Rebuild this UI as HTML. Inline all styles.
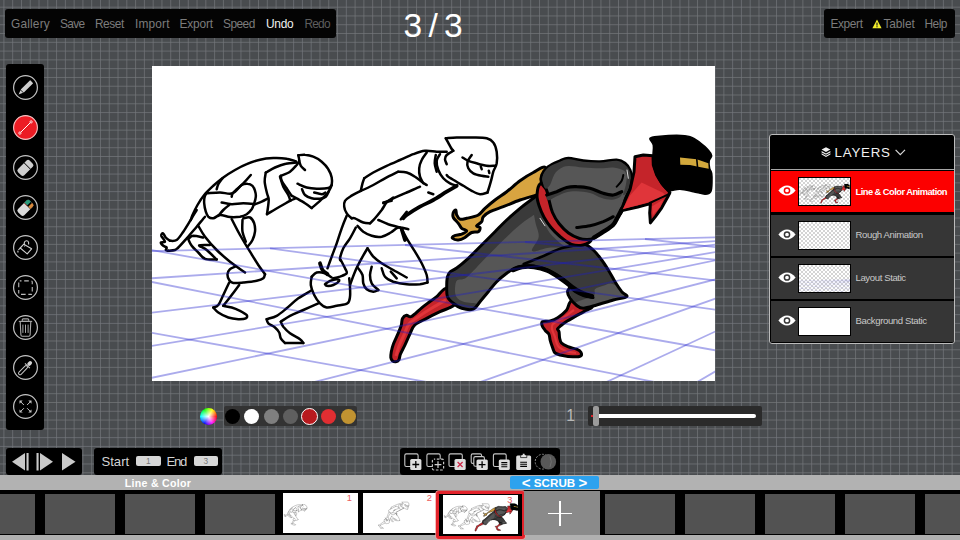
<!DOCTYPE html>
<html lang="en"><head><meta charset="utf-8"><title>Animation Desk</title>
<style>
*{box-sizing:border-box;margin:0;padding:0}
html,body{width:960px;height:540px;overflow:hidden}
body{position:relative;background-color:#494c4f;font-family:"Liberation Sans",sans-serif;}
.abs{position:absolute}
.panel{position:absolute;background:#040404;border-radius:3px}
.mi{position:absolute;top:17px;font-size:11.9px;line-height:15px;color:#7c7c7c;white-space:nowrap}
#counter{position:absolute;left:403.6px;top:6px;font-size:33.5px;line-height:40px;color:#fff;letter-spacing:6.2px;white-space:nowrap}
#canvas{position:absolute;left:152px;top:66px;width:563px;height:315px;background:#fff;overflow:hidden}
.tool{position:absolute;left:12.5px;width:25px;height:25px;border-radius:50%;border:1.4px solid #c8c8c8}
.tool svg{position:absolute;left:-1.4px;top:-1.4px}
#strip{position:absolute;left:0;top:490.2px;width:960px;height:44.8px;background:#000}
#stripb{position:absolute;left:0;top:535px;width:960px;height:5px;background:#b0b0b0}
#label{position:absolute;left:0;top:475px;width:960px;height:15.3px;background:#b2b2b2}
.fr{position:absolute;top:494px;width:70px;height:39.5px;background:#525252}
.th{position:absolute;top:493px;width:75px;height:40px;background:#fff;overflow:hidden}
.num{position:absolute;top:-.5px;right:5.5px;font-size:9.3px;color:#ec5d60}
.lrow{position:absolute;left:771px;width:182.5px;height:41px;background:#363636}
.lth{position:absolute;left:27px;top:6px;width:53px;height:29px;border:1px solid #000;background:#fff;overflow:hidden}
.ltx{position:absolute;left:84.5px;top:14.5px;font-size:9.6px;line-height:12px;color:#c9c9c9;white-space:nowrap;letter-spacing:-.4px}
.eye{position:absolute;left:6.5px;top:14px}
</style></head>
<body>
<svg width="0" height="0" style="position:absolute"><defs><g id="f1"><g fill="none" stroke="#000" stroke-width="2.5" stroke-linecap="round" stroke-linejoin="round"><path d="M298.3 155.3 C299.4 155.2 302.5 154.4 305.0 154.7 C307.5 154.9 310.6 155.5 313.3 156.7 C316.1 157.8 319.2 159.6 321.7 161.7 C324.2 163.8 326.7 166.5 328.3 169.2 C330.0 171.8 331.1 174.9 331.7 177.5 C332.2 180.1 332.2 182.7 331.7 185.0 C331.2 187.3 329.8 189.5 328.7 191.3 C327.6 193.1 326.4 194.2 325.0 195.8 C323.6 197.4 322.2 198.8 320.0 200.8 C317.8 202.9 313.1 206.8 311.7 208.0"/><path d="M311.7 208.0 C310.6 207.2 307.5 204.9 305.0 203.3 C302.5 201.7 298.9 199.6 296.7 198.3 C294.4 197.1 292.5 196.2 291.7 195.8"/><path d="M298.3 155.3 C298.5 156.2 299.4 159.2 299.2 160.8 C298.9 162.4 298.2 163.2 296.7 165.0 C295.1 166.8 292.6 169.9 290.0 171.7 C287.4 173.5 282.4 175.1 280.8 175.8"/><path d="M280.8 175.8 C281.0 176.7 280.7 178.8 281.7 180.8 C282.6 182.9 285.0 185.8 286.7 188.3 C288.3 190.8 290.8 194.6 291.7 195.8"/><path d="M299.2 160.8 C299.4 161.7 299.9 164.3 300.8 165.8 C301.8 167.4 304.3 169.3 305.0 170.0"/><path d="M297.5 183.7 C299.0 184.3 303.5 186.7 306.7 187.5 C309.9 188.3 313.1 188.6 316.7 188.7 C320.3 188.8 325.8 188.6 328.3 188.0 C330.8 187.4 331.1 185.5 331.7 185.0"/><path d="M302.0 189.2 C302.5 190.1 303.4 193.5 305.0 195.0 C306.6 196.5 309.2 197.7 311.7 198.3 C314.2 198.9 317.6 198.9 320.0 198.7 C322.4 198.4 324.4 197.8 325.8 196.7 C327.3 195.5 328.2 192.5 328.7 191.7"/><path d="M314.2 192.5 C315.4 192.8 319.8 194.2 321.7 194.2 C323.5 194.2 324.7 192.8 325.3 192.5"/><path d="M296.7 162.5 C294.9 162.7 289.4 162.8 285.8 163.7 C282.2 164.5 278.3 166.0 275.0 167.5 C271.7 169.0 267.4 171.7 265.8 172.5"/><path d="M265.8 172.5 C265.6 174.0 264.5 178.2 264.7 181.7 C264.9 185.1 266.3 190.3 267.0 193.3 C267.7 196.4 268.7 196.5 268.7 200.0 C268.7 203.5 267.3 211.8 267.0 214.2"/><path d="M267.0 214.2 C268.9 213.1 274.5 209.7 278.3 207.5 C282.2 205.3 287.2 202.3 290.0 200.8 C292.8 199.4 294.2 199.0 295.0 198.7"/><path d="M280.0 176.7 C280.6 178.3 281.9 183.6 283.3 186.7 C284.7 189.7 287.2 192.6 288.3 195.0 C289.5 197.4 290.0 199.9 290.3 200.8"/><path d="M295.8 161.3 C294.3 160.9 290.4 159.2 286.7 158.7 C282.9 158.1 277.8 157.8 273.3 158.0 C268.9 158.2 264.4 158.6 260.0 159.7 C255.6 160.7 250.8 162.4 246.7 164.2 C242.5 165.9 238.9 167.8 235.0 170.0 C231.1 172.2 226.9 174.9 223.3 177.5 C219.7 180.1 216.5 182.9 213.3 185.8 C210.1 188.8 206.8 191.8 204.2 195.0 C201.5 198.2 199.4 201.7 197.5 205.0 C195.6 208.3 193.6 212.5 192.5 215.0 C191.4 217.5 191.1 219.2 190.8 220.0"/><path d="M222.5 178.3 C221.8 179.3 219.3 182.4 218.3 184.2 C217.4 186.0 216.9 188.3 216.7 189.2"/><path d="M206.7 193.3 C208.9 193.2 215.7 192.5 220.0 192.5 C224.3 192.5 228.9 194.6 232.5 193.3 C236.1 192.1 239.2 186.6 241.7 185.0 C244.2 183.4 245.7 183.5 247.5 183.7 C249.3 183.8 251.2 184.6 252.5 185.8 C253.8 187.0 254.4 189.0 255.0 190.8 C255.6 192.6 256.0 194.6 255.8 196.7 C255.7 198.8 254.9 201.2 254.2 203.3 C253.5 205.4 252.9 207.4 251.7 209.2 C250.4 211.0 248.6 212.9 246.7 214.2 C244.7 215.4 242.8 216.2 240.0 216.7 C237.2 217.1 233.3 217.3 230.0 217.0 C226.7 216.7 222.8 214.8 220.0 215.0 C217.2 215.2 215.3 218.1 213.3 218.3 C211.4 218.6 209.6 217.8 208.3 216.7 C207.1 215.6 206.5 213.9 205.8 211.7 C205.1 209.4 204.4 205.8 204.2 203.3 C204.0 200.8 204.2 198.3 204.7 196.7 C205.1 195.0 206.3 193.9 206.7 193.3"/><path d="M250.8 175.0 C249.6 176.4 246.2 180.4 243.3 183.3 C240.4 186.2 235.3 190.3 233.3 192.5 C231.4 194.7 231.9 196.0 231.7 196.7"/><path d="M221.7 202.5 C223.3 202.8 228.1 204.0 231.7 204.2 C235.3 204.3 239.4 203.3 243.3 203.3 C247.2 203.3 253.1 204.0 255.0 204.2"/><path d="M229.2 205.0 C228.2 205.8 225.1 208.2 223.3 210.0 C221.5 211.8 219.2 214.9 218.3 215.8"/><path d="M255.0 204.2 C256.1 203.8 259.6 202.6 261.7 201.7 C263.8 200.8 266.5 199.2 267.5 198.7"/><path d="M196.7 210.0 C195.8 211.4 193.9 214.7 191.7 218.3 C189.4 221.9 185.8 228.1 183.3 231.7 C180.8 235.3 178.9 238.5 176.7 240.0 C174.4 241.5 171.1 240.7 170.0 240.8"/><path d="M205.0 216.7 C203.6 218.3 199.7 223.1 196.7 226.7 C193.6 230.3 189.7 234.9 186.7 238.3 C183.6 241.8 180.3 245.6 178.3 247.5 C176.4 249.4 176.7 249.4 175.0 250.0 C173.3 250.6 169.4 250.7 168.3 250.8"/><path d="M170.0 240.8 C169.3 240.3 167.0 238.8 165.8 237.5 C164.7 236.2 163.8 233.6 163.0 233.3 C162.2 233.1 161.0 234.4 161.3 235.8 C161.7 237.2 165.1 240.6 165.0 241.7 C164.9 242.8 161.1 241.8 160.8 242.5 C160.6 243.2 162.4 245.0 163.3 245.8 C164.3 246.7 166.2 246.8 166.7 247.5 C167.1 248.2 165.6 249.4 165.8 250.0 C166.1 250.6 167.9 250.7 168.3 250.8"/><path d="M189.2 238.0 C189.9 237.6 191.0 235.9 193.3 235.8 C195.7 235.8 201.7 237.2 203.3 237.5"/><path d="M188.3 239.2 C188.9 240.3 190.0 243.6 191.7 245.8 C193.3 248.1 196.1 250.3 198.3 252.5 C200.6 254.7 201.9 257.7 205.0 258.8 C208.1 260.0 214.7 259.4 216.7 259.5"/><path d="M216.7 259.5 C215.0 257.9 209.6 252.4 206.7 250.0 C203.8 247.6 198.6 246.2 199.2 245.3 C199.7 244.5 208.2 245.1 210.0 245.0"/><path d="M198.3 225.8 C199.4 227.6 201.9 232.6 205.0 236.7 C208.1 240.7 212.5 245.8 216.7 250.0 C220.8 254.2 225.3 257.9 230.0 261.7 C234.7 265.4 242.5 270.7 245.0 272.5"/><path d="M231.7 219.2 C233.1 221.8 236.9 229.6 240.0 235.0 C243.1 240.4 246.9 246.7 250.0 251.7 C253.1 256.7 255.8 261.2 258.3 265.0 C260.8 268.8 263.9 272.6 265.0 274.2"/><path d="M265.0 274.2 C264.7 274.9 264.7 277.2 263.3 278.3 C261.9 279.4 260.0 280.1 256.7 280.8 C253.3 281.5 247.2 282.1 243.3 282.5 C239.4 282.9 235.7 283.4 233.3 283.0 C231.0 282.6 230.1 281.5 229.2 280.0 C228.2 278.5 227.4 276.0 227.5 274.2 C227.6 272.4 228.8 270.4 230.0 269.2 C231.2 267.9 234.2 267.1 235.0 266.7"/><path d="M243.3 218.3 C244.4 218.2 248.2 216.7 250.0 217.5 C251.8 218.3 253.3 221.0 254.2 223.3 C255.0 225.7 255.3 228.9 255.0 231.7 C254.7 234.4 253.6 237.6 252.5 240.0 C251.4 242.4 249.0 244.9 248.3 245.8"/><path d="M242.5 220.0 C242.5 221.9 241.9 228.1 242.5 231.7 C243.1 235.3 245.3 240.0 245.8 241.7"/><path d="M229.2 282.5 C228.2 284.6 225.1 291.2 223.3 295.0 C221.5 298.8 220.0 302.9 218.3 305.0 C216.7 307.1 214.2 307.1 213.3 307.5"/><path d="M239.2 285.0 C237.9 286.7 234.3 291.5 231.7 295.0 C229.0 298.5 224.7 304.0 223.3 305.8"/><path d="M213.3 307.5 C214.2 308.3 215.8 310.8 218.3 312.5 C220.8 314.2 225.0 316.4 228.3 317.5 C231.7 318.6 235.4 319.0 238.3 319.2 C241.2 319.3 244.4 319.0 245.8 318.3 C247.2 317.6 247.6 316.2 246.7 315.0 C245.7 313.8 242.5 312.1 240.0 310.8 C237.5 309.6 234.4 308.3 231.7 307.5 C228.9 306.7 224.7 306.1 223.3 305.8"/></g></g><g id="f2"><g fill="none" stroke="#000" stroke-width="2.5" stroke-linecap="round" stroke-linejoin="round"><path d="M445.8 138.3 C447.6 138.2 452.1 137.6 456.7 137.5 C461.2 137.4 468.3 137.4 473.3 137.5 C478.3 137.6 483.3 137.5 486.7 138.3 C490.0 139.2 491.7 140.3 493.3 142.5 C495.0 144.7 496.1 148.2 496.7 151.7 C497.2 155.1 497.2 160.0 496.7 163.3 C496.1 166.7 494.3 168.6 493.3 171.7 C492.4 174.7 491.8 178.2 490.8 181.7 C489.9 185.1 488.1 190.7 487.5 192.5"/><path d="M487.5 192.5 C486.2 192.8 482.6 194.4 480.0 194.2 C477.4 193.9 474.4 192.2 471.7 190.8 C468.9 189.4 466.1 187.5 463.3 185.8 C460.6 184.2 457.5 182.4 455.0 180.8 C452.5 179.3 449.7 177.6 448.3 176.7 C446.9 175.7 446.9 175.3 446.7 175.0"/><path d="M445.8 138.3 C446.7 139.9 449.6 145.4 450.8 147.5 C452.1 149.6 452.9 150.3 453.3 150.8"/><path d="M453.3 150.8 C452.2 151.5 448.1 153.6 446.7 155.0 C445.3 156.4 445.0 157.6 445.0 159.2 C445.0 160.7 446.4 163.3 446.7 164.2"/><path d="M462.5 157.5 C463.5 158.1 466.0 159.9 468.3 160.8 C470.7 161.8 473.6 162.5 476.7 163.3 C479.7 164.2 483.6 165.4 486.7 165.8 C489.7 166.2 493.6 165.8 495.0 165.8"/><path d="M471.7 155.0 C471.0 156.1 468.1 159.4 467.5 161.7 C466.9 163.9 467.4 166.4 468.3 168.3 C469.3 170.3 471.1 172.1 473.3 173.3 C475.6 174.6 479.2 175.3 481.7 175.8 C484.2 176.4 487.2 176.5 488.3 176.7"/><path d="M480.8 166.7 L481.7 169.2"/><path d="M488.8 170.8 L489.3 173.0"/><path d="M440.0 154.2 C439.4 155.3 436.9 158.2 436.7 160.8 C436.4 163.5 437.2 167.1 438.3 170.0 C439.4 172.9 441.4 176.1 443.3 178.3 C445.3 180.6 447.8 182.1 450.0 183.3 C452.2 184.6 455.6 185.4 456.7 185.8"/><path d="M435.8 155.0 C435.6 156.4 434.5 160.6 434.7 163.3 C434.8 166.1 436.3 170.3 436.7 171.7"/><path d="M446.7 151.7 C445.0 151.7 440.3 151.8 436.7 151.7 C433.1 151.5 428.9 150.4 425.0 150.8 C421.1 151.2 417.5 152.6 413.3 154.2 C409.2 155.7 404.4 158.1 400.0 160.0 C395.6 161.9 391.1 163.8 386.7 165.8 C382.2 167.9 377.1 170.4 373.3 172.5 C369.6 174.6 365.7 177.4 364.2 178.3"/><path d="M364.2 178.3 C363.9 179.2 363.1 181.2 362.5 183.3 C361.9 185.4 361.1 189.6 360.8 190.8"/><path d="M360.8 190.8 C362.9 189.9 369.3 187.1 373.3 185.0 C377.4 182.9 380.8 180.6 385.0 178.3 C389.2 176.1 396.1 172.8 398.3 171.7"/><path d="M398.3 171.7 C399.7 171.8 403.9 171.7 406.7 172.5 C409.4 173.3 412.5 175.1 415.0 176.7 C417.5 178.2 419.7 180.3 421.7 181.7 C423.6 183.1 425.8 184.4 426.7 185.0"/><path d="M426.7 152.5 C425.8 153.8 422.9 157.4 421.7 160.0 C420.4 162.6 419.4 165.6 419.2 168.3 C418.9 171.1 419.3 174.2 420.0 176.7 C420.7 179.2 422.8 182.2 423.3 183.3"/><path d="M360.8 190.8 C359.0 191.8 352.6 195.0 350.0 196.7 C347.4 198.3 346.0 199.2 345.0 200.8 C344.0 202.5 343.9 204.6 344.2 206.7 C344.4 208.8 345.4 211.4 346.7 213.3 C347.9 215.3 350.8 217.5 351.7 218.3"/><path d="M351.7 218.3 C352.2 218.3 353.1 217.6 355.0 218.3 C356.9 219.0 360.8 221.7 363.3 222.5 C365.8 223.3 368.9 223.2 370.0 223.3"/><path d="M420.0 186.7 C417.8 187.6 411.1 190.6 406.7 192.5 C402.2 194.4 397.2 196.5 393.3 198.3 C389.4 200.1 385.0 202.5 383.3 203.3"/><path d="M393.3 197.5 C392.2 198.3 388.6 200.4 386.7 202.5 C384.7 204.6 383.6 207.4 381.7 210.0 C379.7 212.6 376.9 216.1 375.0 218.3 C373.1 220.6 370.8 222.5 370.0 223.3"/><path d="M383.3 202.5 L391.7 200.8"/><path d="M428.3 192.5 L433.3 194.2"/><path d="M406.7 211.7 L400.8 219.2"/><path d="M357.5 225.8 C358.5 226.8 361.0 230.0 363.3 231.7 C365.7 233.3 368.6 235.0 371.7 235.8 C374.7 236.7 378.5 237.2 381.7 236.7 C384.9 236.1 388.1 234.0 390.8 232.5 C393.6 231.0 395.4 228.1 398.3 227.5 C401.2 226.9 406.7 228.9 408.3 229.2"/><path d="M378.3 220.0 C380.0 220.7 384.7 222.9 388.3 224.2 C391.9 225.4 398.1 226.9 400.0 227.5"/><path d="M346.7 215.8 C345.8 217.9 343.3 223.8 341.7 228.3 C340.0 232.9 338.3 238.6 336.7 243.3 C335.0 248.1 333.2 252.5 331.7 256.7 C330.1 260.8 328.2 266.4 327.5 268.3"/><path d="M355.8 227.5 C354.9 229.3 352.1 234.9 350.0 238.3 C347.9 241.8 345.0 245.0 343.3 248.3 C341.7 251.7 340.4 256.2 340.0 258.3 C339.6 260.4 340.7 260.4 340.8 260.8"/><path d="M340.8 260.0 C341.5 261.4 344.0 266.1 345.0 268.3 C346.0 270.6 347.5 271.9 346.7 273.3 C345.8 274.7 342.2 275.8 340.0 276.7 C337.8 277.5 334.4 278.1 333.3 278.3"/><path d="M401.7 229.2 C402.5 230.7 404.4 234.6 406.7 238.3 C408.9 242.1 412.5 247.5 415.0 251.7 C417.5 255.8 419.7 259.4 421.7 263.3 C423.6 267.2 425.7 271.8 426.7 275.0 C427.6 278.2 427.4 281.2 427.5 282.5"/><path d="M367.5 248.3 C366.5 250.0 363.8 254.4 361.7 258.3 C359.6 262.2 356.9 267.2 355.0 271.7 C353.1 276.1 350.8 282.8 350.0 285.0"/><path d="M367.5 248.3 C368.5 249.7 371.0 254.2 373.3 256.7 C375.7 259.2 378.3 261.1 381.7 263.3 C385.0 265.6 389.2 267.6 393.3 270.0 C397.5 272.4 404.4 276.2 406.7 277.5"/><path d="M311.7 276.7 C311.5 278.1 310.4 281.9 310.8 285.0 C311.2 288.1 312.6 291.9 314.2 295.0 C315.7 298.1 317.9 301.2 320.0 303.3 C322.1 305.4 323.9 307.1 326.7 307.5 C329.4 307.9 333.2 306.5 336.7 305.8 C340.1 305.1 345.3 304.9 347.5 303.3 C349.7 301.8 349.6 299.4 350.0 296.7 C350.4 293.9 350.1 289.7 350.0 286.7 C349.9 283.6 349.3 279.7 349.2 278.3"/><path d="M311.7 276.7 C312.5 276.0 314.4 273.1 316.7 272.5 C318.9 271.9 322.5 272.5 325.0 273.3 C327.5 274.2 330.6 276.8 331.7 277.5"/><path d="M325.0 284.2 C325.8 283.6 328.1 281.7 330.0 280.8 C331.9 280.0 335.1 279.2 336.7 279.2 C338.2 279.2 339.7 279.9 339.2 280.8 C338.6 281.8 335.4 284.2 333.3 285.0 C331.2 285.8 328.1 286.0 326.7 285.8 C325.3 285.7 325.3 284.4 325.0 284.2"/><path d="M358.3 268.3 C359.0 269.4 361.7 272.5 362.5 275.0 C363.3 277.5 362.6 281.0 363.3 283.3 C364.0 285.7 365.0 287.8 366.7 289.2 C368.3 290.6 371.4 291.5 373.3 291.7 C375.3 291.8 377.5 290.3 378.3 290.0"/><path d="M371.7 266.7 C371.4 268.1 370.0 272.2 370.0 275.0 C370.0 277.8 370.3 280.8 371.7 283.3 C373.1 285.8 377.2 288.9 378.3 290.0"/><path d="M381.7 268.3 C382.2 269.7 383.1 274.4 385.0 276.7 C386.9 278.9 389.7 280.4 393.3 281.7 C396.9 282.9 402.2 283.8 406.7 284.2 C411.1 284.6 416.5 284.4 420.0 284.2 C423.5 283.9 426.2 282.8 427.5 282.5"/><path d="M390.8 271.7 L396.7 278.3"/><path d="M310.8 290.8 C308.8 292.1 302.4 295.4 298.3 298.3 C294.3 301.2 290.3 305.4 286.7 308.3 C283.1 311.2 280.0 314.0 276.7 315.8 C273.3 317.6 268.3 318.6 266.7 319.2"/><path d="M318.3 303.3 C315.8 304.4 308.1 307.9 303.3 310.0 C298.6 312.1 293.8 313.9 290.0 315.8 C286.2 317.8 282.4 320.7 280.8 321.7"/><path d="M266.7 319.2 C266.9 319.9 266.9 321.9 268.3 323.3 C269.7 324.7 273.2 326.0 275.0 327.5 C276.8 329.0 278.2 330.7 279.2 332.5 C280.1 334.3 279.9 336.6 280.8 338.3 C281.8 340.1 284.3 342.2 285.0 343.0"/><path d="M285.0 343.0 L303.3 343.0"/><path d="M303.3 343.0 C302.8 342.4 302.2 340.8 300.0 339.2 C297.8 337.6 292.8 335.4 290.0 333.3 C287.2 331.2 284.9 328.6 283.3 326.7 C281.8 324.7 281.2 322.5 280.8 321.7"/></g><g fill="none" stroke="#000" stroke-width="3.8" stroke-linecap="round" stroke-linejoin="round"><path d="M456.7 185.8 C455.0 186.8 450.6 189.3 446.7 191.7 C442.8 194.0 437.8 197.5 433.3 200.0 C428.9 202.5 424.4 204.2 420.0 206.7 C415.6 209.2 409.4 213.1 406.7 215.0 C403.9 216.9 403.9 217.8 403.3 218.3"/><path d="M320.0 263.3 C320.4 264.4 321.2 268.2 322.5 270.0 C323.8 271.8 326.7 273.5 327.5 274.2"/><path d="M401.7 229.2 L405.0 240.0"/></g></g><g id="f3"><path d="M572.8 300.0 C568.5 300.7 569.0 307.2 566.5 310.2 C564.0 313.1 560.4 315.9 557.7 317.7 C555.0 319.5 552.7 320.3 550.2 320.9 C547.7 321.5 544.0 320.8 542.6 321.5 C541.2 322.2 541.6 323.8 542.0 325.3 C542.4 326.8 544.0 328.8 545.1 330.3 C546.2 331.8 548.0 332.4 548.9 334.1 C549.8 335.8 549.6 338.1 550.2 340.4 C550.8 342.7 551.9 345.8 552.7 347.9 C553.5 350.0 553.5 351.7 555.2 353.0 C556.9 354.3 559.8 354.9 562.7 355.5 C565.6 356.1 569.8 356.7 572.8 356.8 C575.8 356.9 579.0 356.9 580.4 356.1 C581.8 355.4 581.6 353.5 581.0 352.3 C580.4 351.1 578.8 350.1 576.6 349.2 C574.4 348.3 570.3 347.8 567.8 346.7 C565.3 345.6 562.9 344.4 561.5 342.9 C560.1 341.4 560.0 339.8 559.6 337.9 C559.2 336.0 559.4 333.1 559.0 331.6 C558.6 330.1 557.2 330.0 557.5 329.0 C557.8 328.0 559.5 326.8 561.0 325.5 C562.5 324.2 564.1 323.0 566.5 321.5 C568.9 320.0 572.3 318.1 575.3 316.4 C578.2 314.7 581.4 313.1 584.2 311.4 C587.0 309.7 593.9 307.9 592.0 306.0 C590.1 304.1 577.0 299.3 572.8 300.0Z" fill="#c4242a" stroke="#000" stroke-width="3" stroke-linejoin="round" stroke-linecap="round"/><path d="M574.0 310.0 C572.2 311.3 566.5 315.7 563.0 318.0 C559.5 320.3 554.8 322.2 553.0 324.0 C551.2 325.8 551.7 326.8 552.0 329.0 C552.3 331.2 554.0 334.2 555.0 337.0 C556.0 339.8 556.2 343.7 558.0 346.0 C559.8 348.3 563.0 349.8 566.0 351.0 C569.0 352.2 574.3 352.7 576.0 353.0" fill="none" stroke="#e0353a" stroke-width="2.2"/><path d="M447.0 288.0 C443.4 287.8 439.5 294.4 436.7 296.7 C433.9 298.9 432.5 299.6 430.0 301.5 C427.5 303.4 424.8 305.3 421.7 307.8 C418.6 310.3 414.0 315.2 411.5 316.5 C409.0 317.8 408.0 315.0 406.5 315.3 C405.0 315.6 403.4 316.8 402.5 318.5 C401.6 320.2 402.0 322.9 401.2 325.5 C400.4 328.1 399.0 331.3 397.7 334.4 C396.4 337.4 394.6 340.9 393.5 343.8 C392.4 346.7 391.8 349.4 391.3 351.7 C390.9 354.0 390.6 356.0 390.8 357.5 C391.0 359.0 391.7 360.1 392.5 360.8 C393.3 361.5 394.8 361.8 395.8 361.7 C396.9 361.6 398.0 361.3 398.8 360.0 C399.6 358.7 399.5 356.5 400.5 354.0 C401.5 351.5 403.4 348.2 405.0 344.8 C406.6 341.4 408.6 336.6 410.2 333.3 C411.8 330.0 412.1 327.5 414.8 325.0 C417.6 322.5 422.5 320.5 426.7 318.3 C430.9 316.1 435.6 313.8 440.0 311.7 C444.4 309.6 450.3 308.1 453.3 305.8 C456.3 303.5 459.1 301.0 458.0 298.0 C456.9 295.0 450.6 288.2 447.0 288.0Z" fill="#c4242a" stroke="#000" stroke-width="3" stroke-linejoin="round" stroke-linecap="round"/><path d="M446.0 300.0 C443.7 301.3 436.7 305.2 432.0 308.0 C427.3 310.8 421.8 314.3 418.0 317.0 C414.2 319.7 411.3 321.0 409.0 324.0 C406.7 327.0 405.7 331.3 404.0 335.0 C402.3 338.7 400.3 342.5 399.0 346.0 C397.7 349.5 396.5 354.3 396.0 356.0" fill="none" stroke="#e0353a" stroke-width="3"/><path d="M546.0 168.0 C544.0 164.8 537.6 170.4 533.3 172.5 C529.0 174.6 524.4 177.6 520.0 180.8 C515.6 184.0 510.9 188.5 506.7 191.7 C502.5 194.9 498.6 197.2 495.0 200.0 C491.4 202.8 487.8 205.8 485.0 208.3 C482.2 210.8 481.4 213.3 478.3 215.0 C475.2 216.7 469.7 217.6 466.7 218.3 C463.6 219.0 461.7 219.7 460.0 219.2 C458.3 218.6 457.4 216.5 456.7 215.0 C456.0 213.5 456.4 210.4 455.8 210.0 C455.3 209.6 453.8 211.2 453.3 212.5 C452.9 213.8 452.5 215.7 453.3 217.5 C454.2 219.3 456.9 221.5 458.3 223.3 C459.7 225.1 460.3 227.1 461.7 228.3 C463.1 229.6 466.7 229.9 466.7 230.8 C466.7 231.8 463.8 233.3 461.7 234.2 C459.6 235.0 455.7 235.1 454.2 235.8 C452.6 236.5 451.8 237.6 452.5 238.3 C453.2 239.0 456.2 240.1 458.3 240.0 C460.4 239.9 462.8 238.8 465.0 237.5 C467.2 236.2 469.4 233.5 471.7 232.5 C473.9 231.5 476.9 232.5 478.3 231.7 C479.7 230.8 480.3 228.5 480.0 227.5 C479.7 226.5 476.4 226.8 476.7 225.8 C476.9 224.9 480.6 223.2 481.7 221.7 C482.8 220.1 481.9 218.4 483.3 216.7 C484.7 215.0 486.7 213.4 490.0 211.7 C493.3 210.0 498.3 208.6 503.3 206.7 C508.3 204.8 514.4 201.9 520.0 200.0 C525.6 198.1 532.5 196.3 536.7 195.0 C540.9 193.7 543.5 196.5 545.0 192.0 C546.5 187.5 548.0 171.2 546.0 168.0Z" fill="#d8a440" stroke="#000" stroke-width="3" stroke-linejoin="round" stroke-linecap="round"/><clipPath id="pc"><path d="M537.0 196.0 C535.9 194.9 536.1 196.2 533.3 198.3 C530.5 200.4 524.4 204.7 520.0 208.3 C515.6 211.9 510.9 216.1 506.7 220.0 C502.5 223.9 499.2 227.5 495.0 231.7 C490.8 235.9 486.1 240.6 481.7 245.0 C477.2 249.4 472.5 254.5 468.3 258.3 C464.1 262.1 459.8 265.7 456.7 268.0 C453.6 270.3 451.5 270.6 450.0 272.0 C448.5 273.4 448.1 274.2 447.5 276.7 C446.9 279.1 446.7 283.4 446.7 286.7 C446.7 290.0 446.4 293.9 447.5 296.7 C448.6 299.5 450.9 301.4 453.3 303.3 C455.7 305.2 458.4 307.3 461.7 308.3 C465.0 309.3 470.2 310.3 473.3 309.2 C476.4 308.1 477.5 304.6 480.0 301.7 C482.5 298.8 485.5 295.0 488.3 291.7 C491.1 288.4 493.6 284.8 496.7 281.7 C499.8 278.6 503.9 275.4 506.7 273.3 C509.5 271.2 511.1 270.1 513.3 269.0 C515.5 267.9 516.7 267.0 520.0 266.5 C523.3 266.0 528.8 265.5 533.3 266.0 C537.8 266.5 542.2 267.7 546.7 269.5 C551.2 271.3 556.1 274.4 560.0 277.0 C563.9 279.6 568.8 282.6 570.0 285.0 C571.2 287.4 567.5 289.5 567.5 291.7 C567.5 293.9 568.5 296.0 570.0 298.3 C571.5 300.6 574.5 303.8 576.7 305.5 C578.9 307.2 580.0 308.4 583.3 308.3 C586.6 308.2 591.7 306.4 596.7 305.0 C601.7 303.6 608.3 301.4 613.3 300.0 C618.3 298.6 625.3 298.1 626.7 296.7 C628.1 295.3 623.7 294.2 621.7 291.7 C619.8 289.2 617.2 285.3 615.0 281.7 C612.8 278.1 610.5 273.6 608.3 270.0 C606.1 266.4 604.2 263.3 601.7 260.0 C599.2 256.7 596.4 252.8 593.3 250.0 C590.2 247.2 587.2 244.7 583.3 243.3 C579.4 241.9 573.9 242.9 570.0 241.7 C566.1 240.5 563.0 238.5 560.0 236.0 C557.0 233.5 554.2 229.9 551.7 226.7 C549.2 223.5 547.0 220.3 545.0 216.7 C543.0 213.1 541.3 208.4 540.0 205.0 C538.7 201.6 538.1 197.1 537.0 196.0Z"/></clipPath><path d="M537.0 196.0 C535.9 194.9 536.1 196.2 533.3 198.3 C530.5 200.4 524.4 204.7 520.0 208.3 C515.6 211.9 510.9 216.1 506.7 220.0 C502.5 223.9 499.2 227.5 495.0 231.7 C490.8 235.9 486.1 240.6 481.7 245.0 C477.2 249.4 472.5 254.5 468.3 258.3 C464.1 262.1 459.8 265.7 456.7 268.0 C453.6 270.3 451.5 270.6 450.0 272.0 C448.5 273.4 448.1 274.2 447.5 276.7 C446.9 279.1 446.7 283.4 446.7 286.7 C446.7 290.0 446.4 293.9 447.5 296.7 C448.6 299.5 450.9 301.4 453.3 303.3 C455.7 305.2 458.4 307.3 461.7 308.3 C465.0 309.3 470.2 310.3 473.3 309.2 C476.4 308.1 477.5 304.6 480.0 301.7 C482.5 298.8 485.5 295.0 488.3 291.7 C491.1 288.4 493.6 284.8 496.7 281.7 C499.8 278.6 503.9 275.4 506.7 273.3 C509.5 271.2 511.1 270.1 513.3 269.0 C515.5 267.9 516.7 267.0 520.0 266.5 C523.3 266.0 528.8 265.5 533.3 266.0 C537.8 266.5 542.2 267.7 546.7 269.5 C551.2 271.3 556.1 274.4 560.0 277.0 C563.9 279.6 568.8 282.6 570.0 285.0 C571.2 287.4 567.5 289.5 567.5 291.7 C567.5 293.9 568.5 296.0 570.0 298.3 C571.5 300.6 574.5 303.8 576.7 305.5 C578.9 307.2 580.0 308.4 583.3 308.3 C586.6 308.2 591.7 306.4 596.7 305.0 C601.7 303.6 608.3 301.4 613.3 300.0 C618.3 298.6 625.3 298.1 626.7 296.7 C628.1 295.3 623.7 294.2 621.7 291.7 C619.8 289.2 617.2 285.3 615.0 281.7 C612.8 278.1 610.5 273.6 608.3 270.0 C606.1 266.4 604.2 263.3 601.7 260.0 C599.2 256.7 596.4 252.8 593.3 250.0 C590.2 247.2 587.2 244.7 583.3 243.3 C579.4 241.9 573.9 242.9 570.0 241.7 C566.1 240.5 563.0 238.5 560.0 236.0 C557.0 233.5 554.2 229.9 551.7 226.7 C549.2 223.5 547.0 220.3 545.0 216.7 C543.0 213.1 541.3 208.4 540.0 205.0 C538.7 201.6 538.1 197.1 537.0 196.0Z" fill="#565656"/><g clip-path="url(#pc)"><path d="M532.1 195.0 C528.2 195.7 521.2 201.3 515.3 205.5 C509.4 209.6 503.1 214.2 496.5 220.1 C489.9 226.0 482.5 234.1 475.6 241.0 C468.6 248.0 459.9 257.1 454.6 261.9 C449.4 266.8 446.6 265.8 444.2 270.3 C441.7 274.8 438.5 285.2 440.0 289.1 C441.5 293.1 450.2 295.6 453.0 294.2 C455.8 292.8 454.4 283.6 456.7 280.8 C459.0 277.9 461.8 281.2 466.8 277.2 C471.7 273.3 479.7 264.0 486.4 257.1 C493.2 250.3 501.1 242.1 507.4 236.2 C513.6 230.3 519.2 225.6 524.1 221.6 C529.0 217.6 534.3 215.5 536.7 212.2 C539.0 208.8 539.1 204.1 538.3 201.3 C537.6 198.4 535.9 194.3 532.1 195.0Z" fill="#3a3a3a"/><path d="M533.7 207.6 C534.6 204.7 539.2 202.9 540.8 205.0 C542.4 207.1 541.9 215.5 543.3 220.1 C544.8 224.7 546.6 228.6 549.6 232.7 C552.7 236.7 559.0 241.9 561.8 244.4 C564.5 246.9 568.1 247.2 565.9 247.7 C563.8 248.3 554.4 247.2 548.8 247.7 C543.1 248.3 533.7 252.9 532.1 251.1 C530.4 249.3 538.2 241.7 538.7 236.8 C539.3 232.0 536.2 227.1 535.4 222.2 C534.6 217.3 532.8 210.4 533.7 207.6Z" fill="#3a3a3a"/><path d="M522.8 264.5 C522.1 262.9 534.0 260.4 540.4 257.8 C546.8 255.1 554.0 251.2 561.3 248.6 C568.7 245.9 578.1 242.3 584.4 242.1 C590.6 241.9 594.8 243.6 599.0 247.3 C603.2 251.0 606.0 258.5 609.5 264.0 C612.9 269.6 616.4 275.3 619.9 280.8 C623.4 286.2 632.5 292.6 630.4 296.7 C628.3 300.7 614.7 302.5 607.4 305.0 C600.0 307.6 592.0 312.7 586.4 312.2 C580.9 311.6 577.0 305.5 573.9 301.7 C570.8 297.9 570.8 294.1 568.0 289.6 C565.2 285.0 561.1 278.2 557.2 274.5 C553.2 270.8 550.3 268.8 544.6 267.2 C538.9 265.5 523.5 266.0 522.8 264.5Z" fill="#3a3a3a"/><path d="M595.0 289.2 C596.7 287.5 600.3 286.7 603.3 285.8 C606.4 285.0 608.9 282.1 613.3 284.2 C617.8 286.2 630.0 295.1 630.0 298.3 C630.0 301.5 618.9 301.7 613.3 303.3 C607.8 305.0 601.5 307.2 596.7 308.3 C591.8 309.4 587.8 310.8 584.2 310.0 C580.6 309.2 573.5 305.7 575.0 303.3 C576.5 301.0 590.0 298.2 593.3 295.8 C596.7 293.5 593.3 290.8 595.0 289.2Z" fill="#565656"/><path d="M446.7 266.7 C444.4 266.9 443.9 273.7 443.3 277.0 C442.8 280.3 443.1 283.1 443.3 286.7 C443.6 290.2 443.6 295.0 445.0 298.3 C446.4 301.7 448.8 304.4 451.7 306.7 C454.5 308.9 457.8 310.8 462.0 311.7 C466.2 312.5 474.1 312.9 476.7 311.7 C479.2 310.4 479.6 305.8 477.5 304.2 C475.4 302.6 467.7 303.2 464.2 302.0 C460.6 300.8 457.9 299.4 456.3 296.7 C454.8 293.9 454.6 288.9 454.7 285.3 C454.8 281.8 458.3 278.4 457.0 275.3 C455.7 272.2 448.9 266.4 446.7 266.7Z" fill="#3a3a3a"/></g><path d="M537.0 196.0 C535.9 194.9 536.1 196.2 533.3 198.3 C530.5 200.4 524.4 204.7 520.0 208.3 C515.6 211.9 510.9 216.1 506.7 220.0 C502.5 223.9 499.2 227.5 495.0 231.7 C490.8 235.9 486.1 240.6 481.7 245.0 C477.2 249.4 472.5 254.5 468.3 258.3 C464.1 262.1 459.8 265.7 456.7 268.0 C453.6 270.3 451.5 270.6 450.0 272.0 C448.5 273.4 448.1 274.2 447.5 276.7 C446.9 279.1 446.7 283.4 446.7 286.7 C446.7 290.0 446.4 293.9 447.5 296.7 C448.6 299.5 450.9 301.4 453.3 303.3 C455.7 305.2 458.4 307.3 461.7 308.3 C465.0 309.3 470.2 310.3 473.3 309.2 C476.4 308.1 477.5 304.6 480.0 301.7 C482.5 298.8 485.5 295.0 488.3 291.7 C491.1 288.4 493.6 284.8 496.7 281.7 C499.8 278.6 503.9 275.4 506.7 273.3 C509.5 271.2 511.1 270.1 513.3 269.0 C515.5 267.9 516.7 267.0 520.0 266.5 C523.3 266.0 528.8 265.5 533.3 266.0 C537.8 266.5 542.2 267.7 546.7 269.5 C551.2 271.3 556.1 274.4 560.0 277.0 C563.9 279.6 568.8 282.6 570.0 285.0 C571.2 287.4 567.5 289.5 567.5 291.7 C567.5 293.9 568.5 296.0 570.0 298.3 C571.5 300.6 574.5 303.8 576.7 305.5 C578.9 307.2 580.0 308.4 583.3 308.3 C586.6 308.2 591.7 306.4 596.7 305.0 C601.7 303.6 608.3 301.4 613.3 300.0 C618.3 298.6 625.3 298.1 626.7 296.7 C628.1 295.3 623.7 294.2 621.7 291.7 C619.8 289.2 617.2 285.3 615.0 281.7 C612.8 278.1 610.5 273.6 608.3 270.0 C606.1 266.4 604.2 263.3 601.7 260.0 C599.2 256.7 596.4 252.8 593.3 250.0 C590.2 247.2 587.2 244.7 583.3 243.3 C579.4 241.9 573.9 242.9 570.0 241.7 C566.1 240.5 563.0 238.5 560.0 236.0 C557.0 233.5 554.2 229.9 551.7 226.7 C549.2 223.5 547.0 220.3 545.0 216.7 C543.0 213.1 541.3 208.4 540.0 205.0 C538.7 201.6 538.1 197.1 537.0 196.0Z" fill="none" stroke="#000" stroke-width="3" stroke-linejoin="round" stroke-linecap="round"/><path d="M513.0 270.0 C514.5 269.5 518.5 267.5 522.0 267.0 C525.5 266.5 529.8 266.4 534.0 267.0 C538.2 267.6 542.7 268.7 547.0 270.5 C551.3 272.3 556.2 275.5 560.0 278.0 C563.8 280.5 566.7 283.2 570.0 285.5 C573.3 287.8 576.3 290.2 580.0 292.0 C583.7 293.8 590.0 295.8 592.0 296.5" fill="none" stroke="#000" stroke-width="4.6" stroke-linecap="round"/><path d="M569.2 286.7 C570.1 287.5 572.6 290.1 575.0 291.7 C577.4 293.2 580.3 294.8 583.3 295.8 C586.4 296.9 591.7 297.5 593.3 297.8" fill="none" stroke="#000" stroke-width="2.4" stroke-linecap="round"/><path d="M523.7 264.0 C526.5 262.9 534.1 260.0 540.4 257.3 C546.7 254.7 554.4 250.5 561.3 248.3 C568.3 246.2 578.8 245.0 582.3 244.4" fill="none" stroke="#000" stroke-width="2.6" stroke-linecap="round"/><path d="M540.0 184.0 C538.2 185.5 537.2 191.4 537.0 195.0 C536.8 198.6 537.8 201.8 539.0 205.5 C540.2 209.2 542.0 213.6 544.0 217.3 C546.0 221.0 548.4 224.4 551.0 227.5 C553.6 230.6 556.1 233.2 559.5 236.0 C562.9 238.8 567.6 242.8 571.5 244.3 C575.4 245.8 579.8 245.7 583.0 245.0 C586.2 244.3 591.5 241.8 591.0 240.0 C590.5 238.2 583.7 235.8 580.0 234.0 C576.3 232.2 572.3 231.2 569.0 229.0 C565.7 226.8 562.5 224.0 560.0 221.0 C557.5 218.0 555.5 214.8 554.0 211.0 C552.5 207.2 552.0 202.2 551.0 198.0 C550.0 193.8 549.8 188.3 548.0 186.0 C546.2 183.7 541.8 182.5 540.0 184.0Z" fill="#c4242a" stroke="#000" stroke-width="3" stroke-linejoin="round" stroke-linecap="round"/><path d="M541.7 175.0 C542.8 172.3 545.2 169.1 548.3 166.7 C551.3 164.3 556.7 162.2 560.0 160.8 C563.3 159.4 564.4 158.3 568.3 158.3 C572.2 158.3 578.0 160.2 583.3 160.8 C588.6 161.4 594.4 161.8 600.0 161.7 C605.6 161.6 612.5 159.7 616.7 160.0 C620.9 160.3 622.8 161.6 625.0 163.3 C627.2 165.0 628.9 167.5 630.0 170.0 C631.1 172.5 631.8 175.0 631.7 178.3 C631.6 181.6 630.3 186.4 629.2 190.0 C628.1 193.6 626.2 196.4 625.0 200.0 C623.8 203.6 623.1 208.6 621.7 211.7 C620.3 214.8 618.1 216.1 616.7 218.3 C615.3 220.5 615.5 222.8 613.3 225.0 C611.1 227.2 606.6 229.5 603.3 231.7 C600.0 233.9 596.0 237.0 593.3 238.3 C590.6 239.6 589.3 239.5 587.0 239.5 C584.7 239.5 582.6 239.6 579.5 238.5 C576.4 237.4 571.9 235.5 568.5 233.0 C565.1 230.5 561.7 226.9 559.0 223.5 C556.3 220.1 554.2 216.4 552.5 212.5 C550.8 208.6 550.0 203.8 549.0 200.0 C548.0 196.2 547.8 192.8 546.5 190.0 C545.2 187.2 542.3 185.5 541.5 183.0 C540.7 180.5 540.6 177.7 541.7 175.0Z" fill="#565656" stroke="#000" stroke-width="3" stroke-linejoin="round" stroke-linecap="round"/><path d="M542.5 176.7 C543.1 173.2 545.4 170.0 548.3 167.5 C551.2 165.0 556.7 163.1 560.0 161.7 C563.3 160.3 564.4 159.2 568.3 159.2 C572.2 159.2 578.1 161.1 583.3 161.7 C588.6 162.2 594.4 162.6 600.0 162.5 C605.6 162.4 612.6 160.6 616.7 160.8 C620.7 161.1 622.1 162.6 624.2 164.2 C626.2 165.7 628.1 167.6 629.2 170.0 C630.3 172.4 631.0 175.0 630.8 178.3 C630.7 181.7 629.6 187.2 628.3 190.0 C627.1 192.8 623.8 195.8 623.3 195.0 C622.9 194.2 625.3 188.1 625.8 185.0 C626.4 181.9 626.9 179.0 626.7 176.7 C626.4 174.3 626.4 172.4 624.2 170.8 C621.9 169.3 617.4 167.9 613.3 167.5 C609.3 167.1 605.0 168.3 600.0 168.3 C595.0 168.3 588.6 167.9 583.3 167.5 C578.1 167.1 572.2 165.8 568.3 166.0 C564.4 166.2 562.4 167.2 560.0 168.7 C557.6 170.1 555.8 171.9 554.2 174.7 C552.5 177.4 551.5 182.7 550.0 185.0 C548.5 187.3 546.2 189.7 545.0 188.3 C543.8 186.9 541.9 180.1 542.5 176.7Z" fill="#3a3a3a"/><path d="M546.7 195.0 C548.1 193.6 553.3 192.9 556.7 191.7 C560.0 190.4 563.3 188.3 566.7 187.5 C570.0 186.7 572.8 186.5 576.7 186.7 C580.6 186.8 585.6 187.2 590.0 188.3 C594.4 189.4 599.4 192.2 603.3 193.3 C607.2 194.4 610.3 195.3 613.3 195.0 C616.4 194.7 620.6 191.3 621.7 191.7 C622.8 192.0 621.7 195.7 620.0 197.0 C618.3 198.3 614.7 199.5 611.7 199.7 C608.6 199.8 605.3 199.1 601.7 198.0 C598.1 196.9 594.2 194.1 590.0 193.0 C585.8 191.9 580.6 191.4 576.7 191.3 C572.8 191.2 570.0 191.5 566.7 192.3 C563.3 193.2 559.7 195.0 556.7 196.3 C553.6 197.7 550.0 200.6 548.3 200.3 C546.7 200.1 545.3 196.4 546.7 195.0Z" fill="#3a3a3a"/><path d="M546.7 195.0 C548.3 194.4 553.3 192.9 556.7 191.7 C560.0 190.4 563.3 188.3 566.7 187.5 C570.0 186.7 572.8 186.5 576.7 186.7 C580.6 186.8 585.6 187.2 590.0 188.3 C594.4 189.4 599.4 192.2 603.3 193.3 C607.2 194.4 610.3 195.3 613.3 195.0 C616.4 194.7 620.3 192.2 621.7 191.7" fill="none" stroke="#000" stroke-width="3.2" stroke-linecap="round"/><path d="M576.7 227.5 C578.9 227.2 585.6 226.8 590.0 225.8 C594.4 224.9 599.4 223.2 603.3 221.7 C607.2 220.1 611.7 217.5 613.3 216.7" fill="none" stroke="#000" stroke-width="3" stroke-linecap="round"/><path d="M616.7 186.7 C617.5 185.7 620.6 182.8 621.7 180.8 C622.8 178.9 623.1 176.0 623.3 175.0" fill="none" stroke="#000" stroke-width="2" stroke-linecap="round"/><path d="M627.0 170.0 L628.3 178.3" fill="none" stroke="#ddd" stroke-width="1" stroke-linecap="round"/><path d="M540.0 218.3 L545.0 225.8" fill="none" stroke="#ddd" stroke-width="1" stroke-linecap="round"/><path d="M622.0 209.0 C621.2 210.6 618.5 215.8 617.0 218.5 C615.5 221.2 615.2 222.8 613.0 225.0 C610.8 227.2 606.7 229.6 603.5 231.7 C600.3 233.8 595.6 236.6 594.0 237.6" fill="none" stroke="#000" stroke-width="4.5" stroke-linecap="round"/><path d="M635.0 156.7 L643.3 155.0 L653.0 155.8 L653.3 165.0 L656.7 175.0 L661.7 183.3 L669.9 192.5 L668.0 196.5 L661.7 207.8 L655.4 216.6 L650.4 222.9 L649.7 212.8 L650.4 203.6 L637.8 207.0 L620.8 210.8 L625.2 200.2 L630.2 188.9 L634.0 172.0Z" fill="#c4242a" stroke="#000" stroke-width="3" stroke-linejoin="round" stroke-linecap="round"/><path d="M641.6 182.6 L663.0 192.7 L665.5 195.8 L650.4 201.7 L622.7 209.3 L630.2 195.2Z" fill="#e0353a"/><path d="M651.9 206.5 L663.6 199.2 L660.5 206.5 L652.9 215.3Z" fill="#e0353a"/><path d="M669.5 193.9 L659.2 198.7 L649.7 203.0" fill="none" stroke="#000" stroke-width="2" stroke-linecap="round"/><path d="M650.0 138.3 C651.1 136.9 655.6 136.8 660.0 136.3 C664.4 135.8 671.7 135.3 676.7 135.3 C681.7 135.4 686.1 135.5 690.0 136.7 C693.9 137.9 696.9 140.3 700.0 142.5 C703.1 144.7 706.4 147.8 708.3 150.0 C710.3 152.2 711.5 154.0 711.7 155.8 C711.8 157.6 709.5 158.8 709.2 160.8 C708.8 162.9 709.2 166.2 709.7 168.3 C710.1 170.4 711.3 171.1 711.7 173.3 C712.1 175.6 712.1 178.6 712.0 181.7 C711.9 184.7 712.0 189.6 710.8 191.7 C709.7 193.8 707.9 194.2 705.0 194.2 C702.1 194.2 697.5 192.5 693.3 191.7 C689.2 190.8 683.9 189.3 680.0 189.2 C676.1 189.0 672.5 191.0 670.0 190.8 C667.5 190.7 666.7 189.9 665.0 188.3 C663.3 186.8 661.5 184.2 660.0 181.7 C658.5 179.2 656.9 176.1 655.8 173.3 C654.7 170.6 653.8 168.1 653.3 165.0 C652.9 161.9 653.0 158.3 653.0 155.0 C653.0 151.7 653.8 147.8 653.3 145.0 C652.8 142.2 648.9 139.8 650.0 138.3Z" fill="#000" stroke="#000" stroke-width="1.5" stroke-linejoin="round"/><path d="M680.0 157.5 L696.7 159.2 L708.3 163.3 L708.7 168.7 L698.3 166.7 L690.0 165.0 L680.3 164.7Z" fill="#d2a83c"/><path d="M696.7 158.3 L697.5 167.0" fill="none" stroke="#000" stroke-width="1.6"/></g><g id="pg"><g fill="none" stroke="#1a1acc" stroke-opacity="0.37" stroke-width="1.8"><path d="M148.0 251.2 L719.8 237.3"/><path d="M148.0 278.5 L719.8 240.8"/><path d="M148.0 313.1 L719.8 244.2"/><path d="M148.0 346.5 L719.8 251.4"/><path d="M148.0 378.6 L719.8 259.4"/><path d="M312.0 382.6 L719.8 278.3"/><path d="M477.2 383.1 L719.8 297.1"/><path d="M603.1 383.6 L719.8 329.4"/><path d="M693.5 384.2 L719.8 368.8"/><path d="M148.0 332.2 L428.0 382.2"/><path d="M148.0 281.2 L656.0 382.3"/><path d="M148.0 249.5 L719.8 351.1"/><path d="M270.0 248.3 L719.8 310.2"/><path d="M405.0 245.0 L719.8 281.0"/><path d="M525.0 242.0 L719.8 260.1"/><path d="M645.0 239.0 L719.8 247.6"/></g></g><pattern id="chk" width="4" height="4" patternUnits="userSpaceOnUse"><rect width="4" height="4" fill="#fff"/><rect width="2" height="2" fill="#d4d4d4"/><rect x="2" y="2" width="2" height="2" fill="#d4d4d4"/></pattern></defs></svg>
<svg class="abs" style="left:0;top:0" width="960" height="540"><path d="M3.90 0V540M12.68 0V540M21.46 0V540M30.24 0V540M39.02 0V540M47.80 0V540M56.58 0V540M65.36 0V540M74.14 0V540M82.92 0V540M91.70 0V540M100.48 0V540M109.26 0V540M118.04 0V540M126.82 0V540M135.60 0V540M144.38 0V540M153.16 0V540M161.94 0V540M170.72 0V540M179.50 0V540M188.28 0V540M197.06 0V540M205.84 0V540M214.62 0V540M223.40 0V540M232.18 0V540M240.96 0V540M249.74 0V540M258.52 0V540M267.30 0V540M276.08 0V540M284.86 0V540M293.64 0V540M302.42 0V540M311.20 0V540M319.98 0V540M328.76 0V540M337.54 0V540M346.32 0V540M355.10 0V540M363.88 0V540M372.66 0V540M381.44 0V540M390.22 0V540M399.00 0V540M407.78 0V540M416.56 0V540M425.34 0V540M434.12 0V540M442.90 0V540M451.68 0V540M460.46 0V540M469.24 0V540M478.02 0V540M486.80 0V540M495.58 0V540M504.36 0V540M513.14 0V540M521.92 0V540M530.70 0V540M539.48 0V540M548.26 0V540M557.04 0V540M565.82 0V540M574.60 0V540M583.38 0V540M592.16 0V540M600.94 0V540M609.72 0V540M618.50 0V540M627.28 0V540M636.06 0V540M644.84 0V540M653.62 0V540M662.40 0V540M671.18 0V540M679.96 0V540M688.74 0V540M697.52 0V540M706.30 0V540M715.08 0V540M723.86 0V540M732.64 0V540M741.42 0V540M750.20 0V540M758.98 0V540M767.76 0V540M776.54 0V540M785.32 0V540M794.10 0V540M802.88 0V540M811.66 0V540M820.44 0V540M829.22 0V540M838.00 0V540M846.78 0V540M855.56 0V540M864.34 0V540M873.12 0V540M881.90 0V540M890.68 0V540M899.46 0V540M908.24 0V540M917.02 0V540M925.80 0V540M934.58 0V540M943.36 0V540M952.14 0V540M0 7.16H960M0 15.95H960M0 24.73H960M0 33.52H960M0 42.30H960M0 51.08H960M0 59.87H960M0 68.65H960M0 77.44H960M0 86.22H960M0 95.01H960M0 103.79H960M0 112.58H960M0 121.36H960M0 130.15H960M0 138.93H960M0 147.72H960M0 156.50H960M0 165.29H960M0 174.07H960M0 182.86H960M0 191.64H960M0 200.43H960M0 209.21H960M0 218.00H960M0 226.78H960M0 235.57H960M0 244.35H960M0 253.14H960M0 261.92H960M0 270.71H960M0 279.50H960M0 288.28H960M0 297.07H960M0 305.85H960M0 314.64H960M0 323.42H960M0 332.21H960M0 340.99H960M0 349.78H960M0 358.56H960M0 367.35H960M0 376.13H960M0 384.92H960M0 393.70H960M0 402.49H960M0 411.27H960M0 420.06H960M0 428.84H960M0 437.63H960M0 446.41H960M0 455.20H960M0 463.98H960M0 472.77H960M0 481.55H960M0 490.34H960M0 499.12H960M0 507.91H960M0 516.69H960M0 525.48H960M0 534.26H960" stroke="#75787c" stroke-width=".7" fill="none"/></svg><!-- top-left menu -->
<div class="panel" style="left:5px;top:9.4px;width:331px;height:28.8px"></div>
<span class="mi" style="left:11px;letter-spacing:0.18px">Gallery</span>
<span class="mi" style="left:60px;letter-spacing:-0.7px">Save</span>
<span class="mi" style="left:95px;letter-spacing:-0.47px">Reset</span>
<span class="mi" style="left:135px;letter-spacing:0.16px">Import</span>
<span class="mi" style="left:179.5px;letter-spacing:-0.18px">Export</span>
<span class="mi" style="left:223px;letter-spacing:-0.52px">Speed</span>
<span class="mi" style="left:266px;letter-spacing:-0.28px;color:#f0f0f0">Undo</span>
<span class="mi" style="left:304.5px;letter-spacing:-0.8px;color:#5e5e5e">Redo</span>
<div id="counter">3/3</div>
<!-- top-right menu -->
<div class="panel" style="left:824px;top:9.4px;width:130.5px;height:28.8px"></div>
<span class="mi" style="left:830.5px;letter-spacing:-0.38px">Expert</span>
<svg class="abs" style="left:872px;top:19px" width="10" height="10" viewBox="0 0 10 10"><path d="M5 0.6 L9.6 9.2 L0.4 9.2Z" fill="#f2ee2a"/><rect x="4.4" y="3.6" width="1.2" height="3" fill="#222"/><rect x="4.4" y="7.2" width="1.2" height="1.1" fill="#222"/></svg>
<span class="mi" style="left:883.5px;letter-spacing:-0.1px">Tablet</span>
<span class="mi" style="left:924.5px;letter-spacing:-0.5px">Help</span>

<!-- canvas -->
<div id="canvas">
<svg width="563" height="315" viewBox="152 66 563 315"><use href="#f1"/><use href="#f2"/><use href="#f3"/><use href="#pg"/></svg>
</div>

<!-- left toolbar -->
<div class="panel" style="left:6px;top:64px;width:38px;height:366px;background:#000"></div>
<svg class="abs" style="left:12.6px;top:74.7px" width="25" height="25" viewBox="0 0 25 25"><circle cx="12.5" cy="12.5" r="11.9" fill="none" stroke="#c4c4c4" stroke-width="1.2"/><g transform="translate(5.6 19.6) rotate(-44.5)" fill="#cfcfcf"><path d="M0 0 L4.4 -1.9 L4.4 1.9Z"/><rect x="5" y="-2.2" width="13.4" height="4.4" rx=".5"/></g></svg>
<svg class="abs" style="left:12.6px;top:114.7px" width="25" height="25" viewBox="0 0 25 25"><circle cx="12.5" cy="12.5" r="12" fill="#ec1c24"/><circle cx="12.5" cy="12.5" r="11.9" fill="none" stroke="#f7c4c4" stroke-width="1.1"/><path d="M6.9 18.1 L18.1 6.9" stroke="#fff" stroke-width="1" fill="none"/><circle cx="6.9" cy="18.1" r="1.15" fill="#ec1c24" stroke="#fff" stroke-width=".8"/><circle cx="18.1" cy="6.9" r="1.15" fill="#ec1c24" stroke="#fff" stroke-width=".8"/></svg>
<svg class="abs" style="left:12.6px;top:154.7px" width="25" height="25" viewBox="0 0 25 25"><circle cx="12.5" cy="12.5" r="11.9" fill="none" stroke="#c4c4c4" stroke-width="1.2"/><g transform="translate(12.4 12.9) rotate(-45)"><rect x="-8.2" y="-4.4" width="16.4" height="8.8" rx="2.2" fill="#cfcfcf"/><rect x="2.3" y="-4.6" width=".8" height="9.2" fill="#000"/></g></svg>
<svg class="abs" style="left:12.6px;top:194.7px" width="25" height="25" viewBox="0 0 25 25"><circle cx="12.5" cy="12.5" r="11.9" fill="none" stroke="#c4c4c4" stroke-width="1.2"/><g transform="translate(12.4 12.9) rotate(-45)"><rect x="-8.2" y="-4.4" width="16.4" height="8.8" rx="2.2" fill="#dcdcdc"/><path d="M2.6 -4.4 H6 A2.2 2.2 0 0 1 8.2 -2.2 V2.2 A2.2 2.2 0 0 1 6 4.4 H2.6Z" fill="#000"/><path d="M2.9 -4.4 H6 A2.2 2.2 0 0 1 8.2 -2.2 V-0.4 H2.9Z" fill="#2b9b7b"/><path d="M2.9 1.1 H8.2 V2.2 A2.2 2.2 0 0 1 6 4.4 H2.9Z" fill="#d98a3c"/><rect x="2.4" y="-4.4" width=".6" height="4" fill="#c33"/></g></svg>
<svg class="abs" style="left:12.6px;top:234.7px" width="25" height="25" viewBox="0 0 25 25"><circle cx="12.5" cy="12.5" r="11.9" fill="none" stroke="#c4c4c4" stroke-width="1.2"/><g fill="none" stroke="#cfcfcf" stroke-width="1.1" stroke-linejoin="round"><path d="M10.8 9.2 L18.6 13.8 L14.2 18.9 L7.2 13Z"/><path d="M11.3 10 V7.6 A2.2 2.3 0 0 1 15.6 7.4 V9.4"/><path d="M7.6 12.6 L5.4 15"/></g><path d="M4.9 15.2 C4 16.4 4 17.6 4.9 17.6 C5.9 17.6 5.8 16.4 4.9 15.2Z" fill="#cfcfcf"/><circle cx="11.6" cy="11" r=".6" fill="#cfcfcf"/></svg>
<svg class="abs" style="left:12.6px;top:274.7px" width="25" height="25" viewBox="0 0 25 25"><circle cx="12.5" cy="12.5" r="11.9" fill="none" stroke="#c4c4c4" stroke-width="1.2"/><rect x="5.75" y="5.9" width="13.5" height="13.5" rx="1" fill="none" stroke="#bdbdbd" stroke-width="1.1" stroke-dasharray="1.75 2.7 4.6 2.7 1.75 0"/></svg>
<svg class="abs" style="left:12.6px;top:314.7px" width="25" height="25" viewBox="0 0 25 25"><circle cx="12.5" cy="12.5" r="11.9" fill="none" stroke="#c4c4c4" stroke-width="1.2"/><g fill="none" stroke="#a9a9a9" stroke-width="1.1"><path d="M5.8 6.4 H19.2"/><rect x="9.2" y="3.9" width="6.6" height="2.5" rx="1"/><path d="M7.2 6.6 L7.9 20 Q8 21.2 9.2 21.2 H15.8 Q17 21.2 17.1 20 L17.8 6.6"/><path d="M9.9 9.6 V17.9 M12.5 9.6 V17.9 M15.1 9.6 V17.9" stroke-width="1"/></g></svg>
<svg class="abs" style="left:12.6px;top:354.7px" width="25" height="25" viewBox="0 0 25 25"><circle cx="12.5" cy="12.5" r="11.9" fill="none" stroke="#c4c4c4" stroke-width="1.2"/><g transform="translate(6 19.3) rotate(-45.5)"><rect x="0" y="-1.5" width="11.5" height="3" rx="1.5" fill="none" stroke="#c4c4c4" stroke-width="1"/><path d="M12 -3.4 V3.4" stroke="#c4c4c4" stroke-width="1.1"/><rect x="12.6" y="-1.9" width="5.2" height="3.8" rx="1.9" fill="#d4d4d4"/></g></svg>
<svg class="abs" style="left:12.6px;top:394.4px" width="25" height="25" viewBox="0 0 25 25"><circle cx="12.5" cy="12.5" r="11.9" fill="none" stroke="#c4c4c4" stroke-width="1.2"/><path d="M10.90 11.00 L7.50 7.60" stroke="#c4c4c4" stroke-width="1"/><path d="M6.50 6.60 L9.70 6.60 L6.50 9.80Z" fill="#c4c4c4"/><path d="M14.10 11.00 L17.50 7.60" stroke="#c4c4c4" stroke-width="1"/><path d="M18.50 6.60 L15.30 6.60 L18.50 9.80Z" fill="#c4c4c4"/><path d="M10.90 14.20 L7.50 17.60" stroke="#c4c4c4" stroke-width="1"/><path d="M6.50 18.60 L9.70 18.60 L6.50 15.40Z" fill="#c4c4c4"/><path d="M14.10 14.20 L17.50 17.60" stroke="#c4c4c4" stroke-width="1"/><path d="M18.50 18.60 L15.30 18.60 L18.50 15.40Z" fill="#c4c4c4"/></svg>

<!-- palette -->
<div class="abs" style="left:199.5px;top:407.5px;width:17.5px;height:17.5px;border-radius:50%;background:radial-gradient(circle,#fff 0%,rgba(255,255,255,0) 70%),conic-gradient(from 90deg,#f00,#f0f,#00f,#0ff,#0f0,#ff0,#f00)"></div>
<div class="abs" style="left:223.5px;top:406px;width:133.5px;height:19.5px;background:#333;border-radius:2px"></div>
<div class="abs sw" style="left:225px;top:408.5px;width:15px;height:15px;border-radius:50%;background:#000"></div>
<div class="abs sw" style="left:244.3px;top:408.5px;width:15px;height:15px;border-radius:50%;background:#fff"></div>
<div class="abs sw" style="left:263.6px;top:408.5px;width:15px;height:15px;border-radius:50%;background:#7f7f7f"></div>
<div class="abs sw" style="left:282.8px;top:408.5px;width:15px;height:15px;border-radius:50%;background:#5f5f5f"></div>
<div class="abs sw" style="left:301.2px;top:407.5px;width:17px;height:17px;border-radius:50%;background:#b81a1e;border:1.3px solid #fff"></div>
<div class="abs sw" style="left:321.3px;top:408.5px;width:15px;height:15px;border-radius:50%;background:#e02e32"></div>
<div class="abs sw" style="left:340.5px;top:408.5px;width:15px;height:15px;border-radius:50%;background:#c19331"></div>

<!-- slider -->
<div class="abs" style="left:566.3px;top:406.2px;font-size:15.6px;line-height:20px;color:#b9b9b9">1</div>
<div class="abs" style="left:588px;top:406px;width:173.5px;height:19.5px;background:#2b2b2b;border-radius:2px"></div>
<div class="abs" style="left:596px;top:413.7px;width:160px;height:4.2px;background:#fff;border-radius:2px"></div>
<div class="abs" style="left:590.5px;top:415px;width:3px;height:1.5px;background:#d8232a"></div>
<div class="abs" style="left:593px;top:406px;width:6.3px;height:20px;background:#9b9b9b;border-radius:2px"></div>

<!-- layers -->
<div class="abs" style="left:769.3px;top:133.8px;width:185.8px;height:209.8px;background:#000;border:1.6px solid #bcbcbc;border-radius:3px"></div>
<div class="abs" style="left:771px;top:169px;width:182.5px;height:1.1px;background:#a6a6a6"></div>
<div class="abs" style="left:834.5px;top:143.5px;font-size:13.3px;line-height:17px;color:#f2f2f2;letter-spacing:.8px">LAYERS</div>
<svg class="abs" style="left:821px;top:147px" width="10" height="10" viewBox="0 0 10 10"><path d="M5 .2 L9.4 2.6 L5 5 L.6 2.6Z M.6 4.1 L5 6.5 L9.4 4.1 V5.4 L5 7.8 L.6 5.4Z M.6 6.3 L5 8.7 L9.4 6.3 V7.5 L5 9.9 L.6 7.5Z" fill="#f0f0f0"/></svg>
<svg class="abs" style="left:895px;top:149px" width="11" height="7" viewBox="0 0 11 7"><path d="M.6 .8 L5.3 5.6 L10 .8" fill="none" stroke="#d8d8d8" stroke-width="1.2"/></svg>
<div class="lrow" style="top:171.2px;background:#fc0000"><svg class="eye" width="18" height="11" viewBox="0 0 18 11"><path d="M.4 5.5 Q4.5 .5 9 .5 Q13.5 .5 17.6 5.5 Q13.5 10.5 9 10.5 Q4.5 10.5 .4 5.5Z" fill="#fff"/><circle cx="9" cy="5.5" r="2.6" fill="none" stroke="#fc0000" stroke-width="1.5"/></svg><div class="lth"><svg width="51" height="27" style="position:absolute;left:0;top:0"><rect width="51" height="27" fill="url(#chk)"/></svg><svg width="51" height="27" viewBox="152 66 563 315" preserveAspectRatio="none" style="position:absolute;left:0;top:0"><use href="#f1" opacity=".6"/><use href="#f2" opacity=".6"/><use href="#f3"/></svg></div><div class="ltx" style="color:#fff;font-weight:bold;font-size:9.3px;letter-spacing:-.52px">Line &amp; Color Animation</div></div>
<div class="lrow" style="top:214.5px"><svg class="eye" width="18" height="11" viewBox="0 0 18 11"><path d="M.4 5.5 Q4.5 .5 9 .5 Q13.5 .5 17.6 5.5 Q13.5 10.5 9 10.5 Q4.5 10.5 .4 5.5Z" fill="#fff"/><circle cx="9" cy="5.5" r="2.6" fill="none" stroke="#363636" stroke-width="1.5"/></svg><div class="lth"><svg width="51" height="27" style="position:absolute;left:0;top:0"><rect width="51" height="27" fill="url(#chk)"/></svg></div><div class="ltx">Rough Animation</div></div>
<div class="lrow" style="top:257.5px"><svg class="eye" width="18" height="11" viewBox="0 0 18 11"><path d="M.4 5.5 Q4.5 .5 9 .5 Q13.5 .5 17.6 5.5 Q13.5 10.5 9 10.5 Q4.5 10.5 .4 5.5Z" fill="#fff"/><circle cx="9" cy="5.5" r="2.6" fill="none" stroke="#363636" stroke-width="1.5"/></svg><div class="lth"><svg width="51" height="27" style="position:absolute;left:0;top:0"><rect width="51" height="27" fill="url(#chk)"/></svg><svg width="51" height="27" viewBox="152 66 563 315" preserveAspectRatio="none" style="position:absolute;left:0;top:0"><use href="#pg"/></svg></div><div class="ltx">Layout Static</div></div>
<div class="lrow" style="top:300.5px"><svg class="eye" width="18" height="11" viewBox="0 0 18 11"><path d="M.4 5.5 Q4.5 .5 9 .5 Q13.5 .5 17.6 5.5 Q13.5 10.5 9 10.5 Q4.5 10.5 .4 5.5Z" fill="#fff"/><circle cx="9" cy="5.5" r="2.6" fill="none" stroke="#363636" stroke-width="1.5"/></svg><div class="lth"></div><div class="ltx">Background Static</div></div>

<!-- playback -->
<div class="panel" style="left:5.8px;top:448.3px;width:76.4px;height:26.4px;background:#000"></div>
<svg class="abs" style="left:5.5px;top:448px" width="77" height="27" viewBox="5.5 448 77 27"><g fill="#c9c9c9"><path d="M11.5 461.75 L24.5 453 V470.5Z"/><rect x="26" y="453" width="2.1" height="17.5"/><rect x="36" y="453" width="2.1" height="17.5"/><path d="M52.5 461.75 L39.5 453 V470.5Z"/><path d="M75 461.75 L61.5 453 V470.5Z"/></g></svg>
<div class="panel" style="left:94.2px;top:448.3px;width:127.8px;height:26.4px;background:#000"></div>
<span class="abs" style="left:101.5px;top:453.7px;font-size:13.1px;line-height:16px;color:#d4d4d4">Start</span>
<span class="abs" style="left:166.5px;top:453.7px;font-size:13.1px;line-height:16px;color:#d4d4d4;letter-spacing:-1.2px">End</span>
<div class="abs" style="left:136px;top:455.9px;width:24.5px;height:10.6px;background:#d6d6d6;border-radius:2px;font-size:8.3px;line-height:11px;text-align:center;color:#777">1</div>
<div class="abs" style="left:193.5px;top:455.9px;width:24.5px;height:10.6px;background:#d6d6d6;border-radius:2px;font-size:8.3px;line-height:11px;text-align:center;color:#777">3</div>

<!-- frame actions -->
<div class="panel" style="left:400px;top:448.2px;width:160.3px;height:26.5px;background:#000"></div>

<svg class="abs" style="left:400px;top:448px" width="161" height="27" viewBox="400 448 161 27"><rect x="404.8" y="453.9" width="13.3" height="12.6" rx="1.5" fill="none" stroke="#c6c6c6" stroke-width="1.1"/><rect x="410.2" y="459" width="11.2" height="11" rx="1.5" fill="#dedede"/><path d="M412.40000000000003 464.5 H419.2 M415.8 461.1 V467.9" stroke="#000" stroke-width="1.3" fill="none"/><rect x="426.9" y="453.9" width="13.3" height="12.6" rx="1.5" fill="none" stroke="#c6c6c6" stroke-width="1.1"/><rect x="432.4" y="459.2" width="11.2" height="10.8" rx="1.5" fill="#000" stroke="#c6c6c6" stroke-width="1.2" stroke-dasharray="2.6 1.6" stroke-dashoffset="1.3"/><path d="M434.6 464.6 H441.4 M438 461.20000000000005 V468.0" stroke="#d0d0d0" stroke-width="1.2" fill="none"/><rect x="449" y="453.9" width="13.3" height="12.6" rx="1.5" fill="none" stroke="#c6c6c6" stroke-width="1.1"/><rect x="454.5" y="459" width="11.2" height="11" rx="1.5" fill="#dedede"/><path d="M457.6 462 L462.6 467 M462.6 462 L457.6 467" stroke="#cc2344" stroke-width="1.2"/><rect x="471.2" y="453.9" width="10.4" height="9.5" rx="1.5" fill="none" stroke="#c6c6c6" stroke-width="1.1"/><rect x="473.8" y="456.6" width="10.6" height="9.6" rx="1.5" fill="#000" stroke="#c6c6c6" stroke-width="1.1"/><rect x="476.5" y="459.4" width="11.3" height="10.6" rx="1.5" fill="#dedede"/><path d="M478.70000000000005 464.7 H485.5 M482.1 461.3 V468.09999999999997" stroke="#000" stroke-width="1.3" fill="none"/><rect x="493.4" y="453.9" width="12.8" height="12.6" rx="1.5" fill="none" stroke="#c6c6c6" stroke-width="1.1"/><rect x="498.8" y="459.4" width="11" height="10.6" rx="1.5" fill="#dedede"/><path d="M501.3 462.6 H507.3 M501.3 464.7 H507.3 M501.3 466.8 H507.3" stroke="#000" stroke-width="1.1"/><rect x="516.2" y="455.6" width="14.9" height="14.4" rx="1.5" fill="#dedede"/><path d="M520.6 457.6 V455.6 Q520.6 454.9 521.6 454.9 H522.2 Q522.4 453.3 523.7 453.3 Q525 453.3 525.2 454.9 H525.8 Q526.8 454.9 526.8 455.6 V457.6Z" fill="#dedede" stroke="#000" stroke-width=".7"/><path d="M520.2 462.2 H527 M520.2 464.3 H527 M520.2 466.4 H527" stroke="#000" stroke-width="1.1"/><circle cx="542.6" cy="461.7" r="7.4" fill="none" stroke="#8a8a8a" stroke-width="1" stroke-dasharray="2 1.4"/><circle cx="548.3" cy="461.7" r="7.8" fill="#585858"/><path d="M550 456.5 Q552.6 461.7 550 467" fill="none" stroke="#777" stroke-width=".8"/></svg>
<!-- timeline -->
<div id="label"></div>
<div class="abs" style="left:100px;top:477px;width:116px;text-align:center;font-size:10.6px;line-height:13px;font-weight:bold;color:#fff;letter-spacing:.3px">Line &amp; Color</div>
<div class="abs" style="left:510.4px;top:476.2px;width:88.3px;height:13.3px;background:#2da2ee;border-radius:2px;text-align:center;font-size:11.6px;line-height:13.6px;font-weight:bold;color:#fff;letter-spacing:.05px;white-space:nowrap"><span style="font-size:15px;line-height:0;position:relative;top:.9px">&lt;</span> SCRUB <span style="font-size:15px;line-height:0;position:relative;top:.9px">&gt;</span></div>
<div id="strip"></div><div id="stripb"></div>
<div class="fr" style="left:-35px"></div><div class="fr" style="left:45px"></div><div class="fr" style="left:125px"></div><div class="fr" style="left:205px"></div>
<div class="fr" style="left:605px"></div><div class="fr" style="left:685px"></div><div class="fr" style="left:765px"></div><div class="fr" style="left:845px"></div><div class="fr" style="left:925px"></div>
<div class="th" style="left:282.5px"><svg width="75" height="40" viewBox="152 66 563 315" preserveAspectRatio="none" style="position:absolute;left:0;top:0"><use href="#f1" opacity=".65"/></svg><span class="num">1</span></div>
<div class="th" style="left:362.5px"><svg width="75" height="40" viewBox="152 66 563 315" preserveAspectRatio="none" style="position:absolute;left:0;top:0"><use href="#f2" opacity=".65"/></svg><span class="num">2</span></div>
<div class="abs" style="left:436px;top:491px;width:88.5px;height:47.5px;border:3px solid #e3232b;border-radius:3px;background:#000;box-shadow:0 0 0 .7px #f3a0a0"></div>
<div class="th" style="left:442.5px;top:495px;height:38.5px;width:75.5px"><svg width="75.5" height="38.5" viewBox="152 66 563 315" preserveAspectRatio="none" style="position:absolute;left:0;top:0"><use href="#f1" opacity=".65"/><use href="#f2" opacity=".65"/><use href="#f3"/></svg><span class="num">3</span></div>
<div class="abs" style="left:524.4px;top:490.6px;width:75.4px;height:44.4px;background:#8a8a8a"></div>
<div class="abs" style="left:547.8px;top:512.6px;width:24.2px;height:1.7px;background:#fff"></div>
<div class="abs" style="left:559px;top:501.1px;width:1.7px;height:24.6px;background:#fff"></div>

</body></html>
